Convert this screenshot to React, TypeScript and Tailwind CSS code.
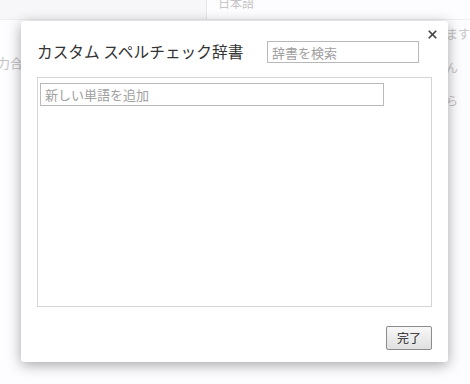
import { X } from 'lucide-react';

const jp = "font-['Noto_Sans_CJK_JP','Noto_Sans',sans-serif]";

function BackgroundPage() {
  return (
    <div className={`h-[384px] w-[470px] overflow-hidden bg-[#fdfcfe] text-[#c4c4c4] ${jp}`}>
      <div className="flex h-[20px] border-b border-[#eeeeee]">
        <div className="w-[207px] border-r border-[#e6e6e6] bg-[#f7f6f9]" />
        <div className="-mt-[5px] pl-[11px] text-[12px] leading-[16px]">日本語</div>
      </div>
      <div className="flex">
        <div className="-ml-[3px] w-[60px] whitespace-nowrap pt-[35px] text-[13px] leading-[16px]">力合系</div>
        <div className="flex-1" />
        <div className="w-[24px] whitespace-nowrap pt-[6px] text-[12px] leading-[16px]">
          <div>ます</div>
          <div className="mt-[18px]">ん</div>
          <div className="mt-[17px]">ら</div>
        </div>
      </div>
      <div className="mt-[286px] border-t border-[#ededed]" />
      <div className="mt-[14px] pl-[14px] text-[12px] leading-[14px]">・・・・ ・ ・</div>
    </div>
  );
}

function Dialog() {
  return (
    <div
      className={`absolute left-[21px] top-[21px] flex h-[341px] w-[427px] flex-col rounded-[3px] bg-white px-[16px] pt-[20px] shadow-[0_3px_14px_rgba(0,0,0,0.35)] ${jp}`}
    >
      <button className="absolute right-[9px] top-[7px] text-[#444]">
        <X size={13} strokeWidth={3.2} />
      </button>
      <div className="flex items-center justify-between pr-[13px]">
        <h1 className="text-[15.7px] leading-[22px] text-[#333]">カスタム スペルチェック辞書</h1>
        <input
          className="h-[22px] w-[152px] border border-[#b9b9b9] px-[4px] text-[13px] text-[#333] outline-none placeholder:text-[#a0a0a0]"
          placeholder="辞書を検索"
        />
      </div>
      <div className="mt-[14px] h-[230px] border border-[#d4d4d4] pl-[2px] pt-[3px]">
        <input
          className="h-[23px] w-[344px] border border-[#b9b9b9] px-[4px] text-[13px] text-[#333] outline-none placeholder:text-[#a0a0a0]"
          placeholder="新しい単語を追加"
        />
      </div>
      <div className="flex justify-end pt-[19px]">
        <button className="h-[24px] w-[46px] rounded-[2px] border border-[#8c8c8c] bg-gradient-to-b from-[#f8f8f8] to-[#e0e0e0] text-[12px] leading-[20px] text-[#222]">
          完了
        </button>
      </div>
    </div>
  );
}

export default function App() {
  return (
    <div className="relative h-[384px] w-[470px] overflow-hidden">
      <BackgroundPage />
      <Dialog />
    </div>
  );
}
